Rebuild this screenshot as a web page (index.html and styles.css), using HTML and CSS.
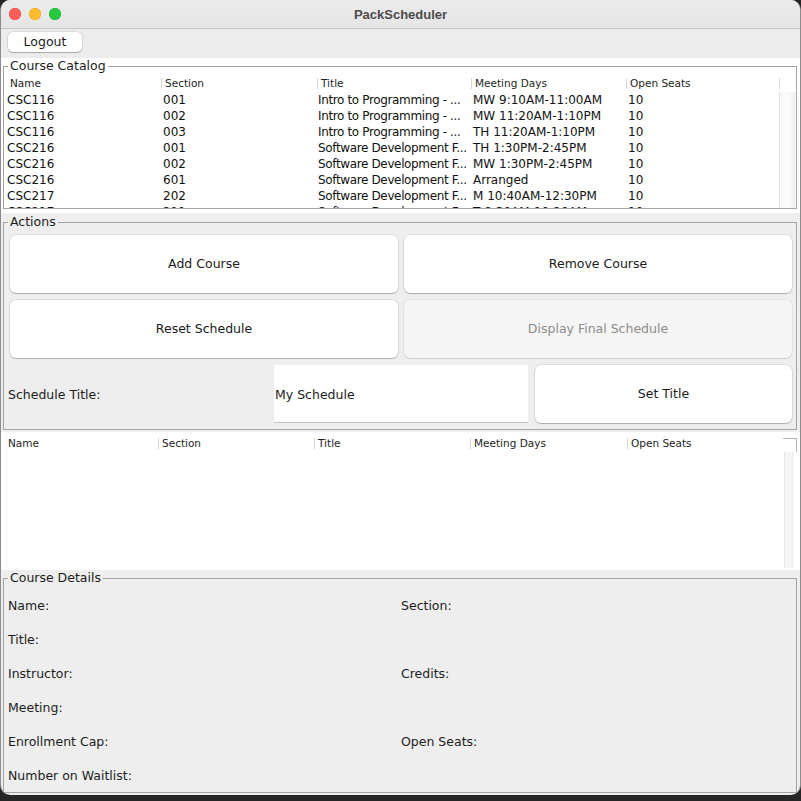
FILE: index.html
```html
<!DOCTYPE html>
<html>
<head>
<meta charset="utf-8">
<title>PackScheduler</title>
<link rel="stylesheet" href="styles.css">
</head>
<body>
<div class="window">
  <div class="titlebar">
    <div class="lights">
      <span class="light red"></span>
      <span class="light yellow"></span>
      <span class="light green"></span>
    </div>
    <div class="wintitle">PackScheduler</div>
    <div></div>
  </div>

  <div class="toolbar">
    <button class="btn logout">Logout</button>
  </div>

  <section class="catalog-panel">
    <fieldset class="titled">
      <legend>Course Catalog</legend>
      <div class="catalog-inner">
        <div class="thead cat-cols">
          <div class="th first">Name</div>
          <div class="th">Section</div>
          <div class="th">Title</div>
          <div class="th">Meeting Days</div>
          <div class="th">Open Seats</div>
          <div class="th"></div>
        </div>
        <div class="cat-body">
          <div class="rows">
            <div class="tr cat-cols"><div class="td">CSC116</div><div class="td">001</div><div class="td ttl">Intro to Programming - ...</div><div class="td">MW 9:10AM-11:00AM</div><div class="td">10</div></div>
            <div class="tr cat-cols"><div class="td">CSC116</div><div class="td">002</div><div class="td ttl">Intro to Programming - ...</div><div class="td">MW 11:20AM-1:10PM</div><div class="td">10</div></div>
            <div class="tr cat-cols"><div class="td">CSC116</div><div class="td">003</div><div class="td ttl">Intro to Programming - ...</div><div class="td">TH 11:20AM-1:10PM</div><div class="td">10</div></div>
            <div class="tr cat-cols"><div class="td">CSC216</div><div class="td">001</div><div class="td ttl">Software Development F...</div><div class="td">TH 1:30PM-2:45PM</div><div class="td">10</div></div>
            <div class="tr cat-cols"><div class="td">CSC216</div><div class="td">002</div><div class="td ttl">Software Development F...</div><div class="td">MW 1:30PM-2:45PM</div><div class="td">10</div></div>
            <div class="tr cat-cols"><div class="td">CSC216</div><div class="td">601</div><div class="td ttl">Software Development F...</div><div class="td">Arranged</div><div class="td">10</div></div>
            <div class="tr cat-cols"><div class="td">CSC217</div><div class="td">202</div><div class="td ttl">Software Development F...</div><div class="td">M 10:40AM-12:30PM</div><div class="td">10</div></div>
            <div class="tr cat-cols"><div class="td">CSC217</div><div class="td">211</div><div class="td ttl">Software Development F...</div><div class="td">T 8:30AM-10:20AM</div><div class="td">10</div></div>
          </div>
          <div class="vscroll"></div>
        </div>
      </div>
    </fieldset>
  </section>

  <section class="actions-panel">
    <fieldset class="titled">
      <legend>Actions</legend>
      <div class="actions-inner">
        <div class="btn-grid">
          <button class="btn big">Add Course</button>
          <button class="btn big">Remove Course</button>
          <button class="btn big">Reset Schedule</button>
          <button class="btn big disabled" disabled>Display Final Schedule</button>
        </div>
        <div class="title-row">
          <label class="title-label">Schedule Title:</label>
          <div class="textfield">My Schedule</div>
          <button class="btn big settitle">Set Title</button>
        </div>
      </div>
    </fieldset>
  </section>

  <section class="schedule">
    <div class="thead sched-cols">
      <div class="th first">Name</div>
      <div class="th">Section</div>
      <div class="th">Title</div>
      <div class="th">Meeting Days</div>
      <div class="th">Open Seats</div>
      <div class="corner"></div>
    </div>
    <div class="sched-body">
      <div class="sched-rows"></div>
      <div class="sched-track"></div>
    </div>
  </section>

  <section class="details-panel">
    <fieldset class="titled">
      <legend>Course Details</legend>
      <div class="details-grid">
        <div class="lbl">Name:</div><div class="lbl">Section:</div>
        <div class="lbl">Title:</div><div class="lbl"></div>
        <div class="lbl">Instructor:</div><div class="lbl">Credits:</div>
        <div class="lbl">Meeting:</div><div class="lbl"></div>
        <div class="lbl">Enrollment Cap:</div><div class="lbl">Open Seats:</div>
        <div class="lbl">Number on Waitlist:</div><div class="lbl"></div>
      </div>
    </fieldset>
  </section>
</div>
</body>
</html>
```
FILE: styles.css
```css
* { box-sizing: border-box; }

html, body {
  margin: 0;
  padding: 0;
  background: #262626;
}

body {
  font-family: "DejaVu Sans", sans-serif;
  font-size: 12.5px;
  color: #1c1c1c;
}

.window {
  width: 801px;
  height: 795px;
  background: #eeeeee;
  border-left: 1px solid #8c8c8c;
  border-right: 1px solid #8c8c8c;
  border-radius: 10px;
  overflow: hidden;
  display: flex;
  flex-direction: column;
}

/* title bar */
.titlebar {
  flex: 0 0 29px;
  background: linear-gradient(#ecebec, #e6e5e6);
  border-bottom: 1px solid #c6c6c6;
  display: grid;
  grid-template-columns: 1fr auto 1fr;
  align-items: center;
}
.lights {
  display: flex;
  gap: 8px;
  padding-left: 8px;
}
.light {
  width: 12px;
  height: 12px;
  border-radius: 50%;
  display: block;
}
.red { background: #fe5f57; box-shadow: inset 0 0 0 0.5px #e0443e; }
.yellow { background: #febc2e; box-shadow: inset 0 0 0 0.5px #dea123; }
.green { background: #28c840; box-shadow: inset 0 0 0 0.5px #1aab29; }
.wintitle {
  font-family: "Liberation Sans", Arial, sans-serif;
  font-weight: bold;
  font-size: 13px;
  color: #4b4b4b;
}

/* toolbar */
.toolbar {
  flex: 0 0 29px;
  background: #ececec;
  padding: 3px 0 6px 7px;
}

/* buttons */
.btn {
  font-family: "DejaVu Sans", sans-serif;
  font-size: 12.5px;
  color: #1a1a1a;
  background: #ffffff;
  border: none;
  border-radius: 5px;
  box-shadow: 0 0 0 0.5px rgba(0, 0, 0, 0.14), 0 1px 1px rgba(0, 0, 0, 0.22);
  padding: 0;
  margin: 0;
}
.logout {
  width: 74px;
  height: 20px;
  display: block;
  line-height: 18px;
}
.big {
  height: 58px;
  border-radius: 6px;
}
.disabled {
  background: #f5f5f5;
  color: #8c8c8c;
  box-shadow: 0 0 0 0.5px rgba(0, 0, 0, 0.08), 0 1px 1px rgba(0, 0, 0, 0.1);
}

/* titled borders */
.titled {
  margin: 0 3px 0 2px;
  padding: 0;
  border: 1px solid #a4a4a4;
  min-width: 0;
}
.titled legend {
  font-size: 12.5px;
  line-height: 16px;
  height: 16px;
  padding: 0 2px;
  margin-left: 4px;
  color: #1c1c1c;
}

/* catalog */
.catalog-panel {
  flex: 0 0 155px;
  background: #ffffff;
}
.catalog-panel .titled { margin-bottom: 4px; }
.catalog-inner {
  padding: 1px 0 0 1px;
}
.cat-cols {
  display: grid;
  grid-template-columns: 156px 156px 154px 155px 153px 16px;
}
.thead {
  height: 17px;
  align-items: center;
}
.th {
  height: 11px;
  line-height: 11px;
  font-size: 10.5px;
  color: #1e1e1e;
  border-left: 1px solid #d6d6d6;
  padding-left: 3px;
  white-space: nowrap;
  overflow: hidden;
}
.th.first { border-left-color: transparent; padding-left: 4px; }
.cat-body {
  display: flex;
  height: 116px;
}
.rows {
  width: 774px;
  height: 116px;
  overflow: hidden;
}
.tr {
  height: 16px;
  line-height: 16px;
  grid-template-columns: 156px 156px 154px 155px 153px;
}
.td {
  font-size: 12px;
  color: #111;
  padding-left: 2px;
  white-space: nowrap;
  overflow: hidden;
}
.td.ttl {
  padding-left: 1px;
  letter-spacing: -0.36px;
}
.vscroll {
  width: 16px;
  height: 116px;
  background: linear-gradient(to right, #e2e2e2 0, #e2e2e2 1px, #f6f6f6 1px, #fcfcfc 8px, #f3f3f3 15px, #e4e4e4 16px);
}

/* actions */
.actions-panel {
  flex: 0 0 219px;
  padding-top: 1px;
}
.actions-panel .titled { margin-bottom: 2px; }
.actions-inner {
  padding: 5px 4px 6px 4px;
  display: flex;
  flex-direction: column;
  gap: 7px;
}
.btn-grid {
  display: grid;
  grid-template-columns: 388px 388px;
  gap: 7px 6px;
  margin-left: 2px;
}
.btn-grid .big { padding-bottom: 2px; }
.title-row {
  display: flex;
  align-items: center;
  height: 58px;
}
.title-label {
  width: 266px;
  flex: 0 0 266px;
}
.textfield {
  flex: 0 0 254px;
  height: 58px;
  background: #ffffff;
  border-bottom: 1px solid #c4c4c4;
  display: flex;
  align-items: center;
  padding-left: 1px;
  padding-top: 1px;
  margin-right: 7px;
}
.settitle {
  flex: 0 0 257px;
  padding-bottom: 1px;
}

/* schedule table */
.schedule {
  flex: 0 0 138px;
  background: #ffffff;
  padding: 3px 0 0 2px;
}
.sched-cols {
  display: grid;
  grid-template-columns: 155px 156px 156px 157px 156px 14px;
  height: 16px;
  align-items: start;
}
.sched-cols .th { margin-top: 3px; }
.corner {
  width: 14px;
  height: 14px;
  margin-top: 3px;
  border-top: 1px solid #b4b4b4;
  border-right: 1px solid #b4b4b4;
}
.sched-body {
  display: flex;
  height: 119px;
}
.sched-rows {
  width: 781px;
}
.sched-track {
  width: 10px;
  height: 116px;
  margin-top: 1px;
  background: linear-gradient(to right, #e6e6e6 0, #e6e6e6 1px, #f7f7f7 1px, #f2f2f2 10px);
}

/* details */
.details-panel {
  flex: 0 0 225px;
}
.details-panel .titled { margin-bottom: 2px; }
.details-grid {
  display: grid;
  grid-template-columns: 393px 1fr;
  grid-auto-rows: 34px;
  align-items: center;
  padding: 2px 0 0 4px;
}
.lbl {
  font-size: 12.5px;
  color: #1c1c1c;
  white-space: nowrap;
}
```
